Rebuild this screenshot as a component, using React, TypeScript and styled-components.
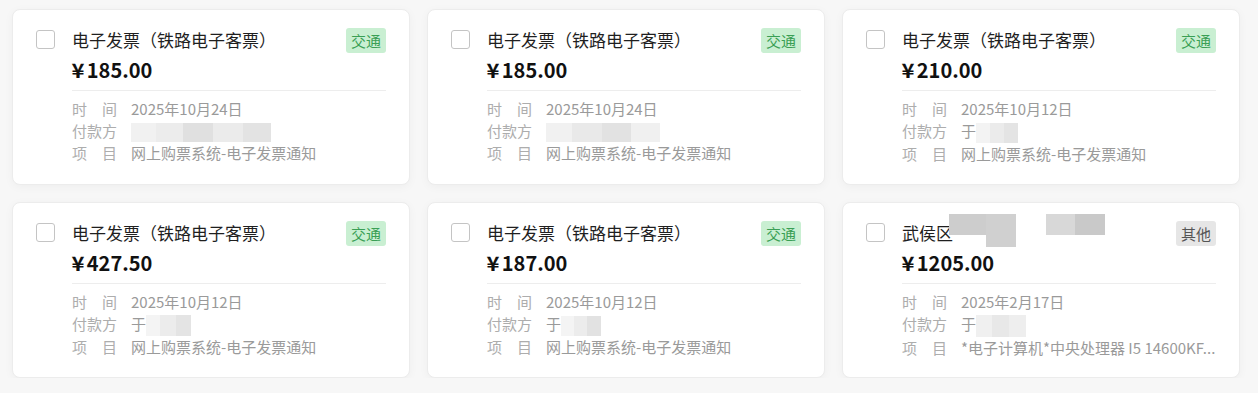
import React from 'react'
import styled, { createGlobalStyle } from 'styled-components'

type Tile = { w: number; h?: number; c: string }
type MosaicSpec = { tiles: Tile[]; h: number; top?: number; gapBefore?: number }

interface invoiceProps {
	title: string;
	titleMosaic?: MosaicSpec[];
	tag: string;
	tagKind: 'traffic' | 'other';
	amount: string;
	date: string;
	payerPrefix?: string;
	payerMosaic: MosaicSpec;
	item: string;
}

const invoices: invoiceProps[] = [
	{
		title: '电子发票（铁路电子客票）',
		tag: '交通',
		tagKind: 'traffic',
		amount: '185.00',
		date: '2025年10月24日',
		payerMosaic: {
			h: 19,
			tiles: [
				{ w: 25, c: '#f1f1f1' },
				{ w: 27, c: '#ececec' },
				{ w: 30, c: '#e0e0e0' },
				{ w: 30, c: '#ebebeb' },
				{ w: 28, c: '#e3e3e3' },
			],
		},
		item: '网上购票系统-电子发票通知',
	},
	{
		title: '电子发票（铁路电子客票）',
		tag: '交通',
		tagKind: 'traffic',
		amount: '185.00',
		date: '2025年10月24日',
		payerMosaic: {
			h: 19,
			tiles: [
				{ w: 26, c: '#f1f1f1' },
				{ w: 30, c: '#e9e9e9' },
				{ w: 29, c: '#e2e2e2' },
				{ w: 29, c: '#f0f0f0' },
			],
		},
		item: '网上购票系统-电子发票通知',
	},
	{
		title: '电子发票（铁路电子客票）',
		tag: '交通',
		tagKind: 'traffic',
		amount: '210.00',
		date: '2025年10月12日',
		payerPrefix: '于',
		payerMosaic: {
			h: 20,
			tiles: [
				{ w: 14, c: '#f3f3f3' },
				{ w: 14, c: '#ebebeb' },
				{ w: 14, c: '#e4e4e4' },
			],
		},
		item: '网上购票系统-电子发票通知',
	},
	{
		title: '电子发票（铁路电子客票）',
		tag: '交通',
		tagKind: 'traffic',
		amount: '427.50',
		date: '2025年10月12日',
		payerPrefix: '于',
		payerMosaic: {
			h: 21,
			tiles: [
				{ w: 14, c: '#f4f4f4' },
				{ w: 16, c: '#ececec' },
				{ w: 15, c: '#e4e4e4' },
			],
		},
		item: '网上购票系统-电子发票通知',
	},
	{
		title: '电子发票（铁路电子客票）',
		tag: '交通',
		tagKind: 'traffic',
		amount: '187.00',
		date: '2025年10月12日',
		payerPrefix: '于',
		payerMosaic: {
			h: 20,
			tiles: [
				{ w: 13, c: '#f4f4f4' },
				{ w: 13, c: '#ececec' },
				{ w: 14, c: '#e2e2e2' },
			],
		},
		item: '网上购票系统-电子发票通知',
	},
	{
		title: '武侯区',
		titleMosaic: [
			{
				h: 33,
				top: -6,
				gapBefore: -4,
				tiles: [
					{ w: 7, c: '#cdcdcd', h: 21 },
					{ w: 30, c: '#cdcdcd', h: 21 },
					{ w: 30, c: '#d0d0d0' },
				],
			},
			{
				h: 21,
				top: -6,
				gapBefore: 30,
				tiles: [
					{ w: 29, c: '#d8d8d8' },
					{ w: 30, c: '#c9c9c9' },
				],
			},
		],
		tag: '其他',
		tagKind: 'other',
		amount: '1205.00',
		date: '2025年2月17日',
		payerPrefix: '于',
		payerMosaic: {
			h: 22,
			tiles: [
				{ w: 16, c: '#f0f0f0' },
				{ w: 17, c: '#e8e8e8' },
				{ w: 17, c: '#eeeeee' },
			],
		},
		item: '*电子计算机*中央处理器 I5 14600KF...',
	},
]

const Mosaic = ({ spec }: { spec: MosaicSpec }) => (
	<MosaicBox $h={spec.h} $top={spec.top ?? 0} $gap={spec.gapBefore ?? 0}>
		{spec.tiles.map((t, i) => (
			<MosaicTile key={i} $w={t.w} $h={t.h ?? spec.h} $c={t.c} />
		))}
	</MosaicBox>
)

const InvoiceCard = (props: invoiceProps) => {
	return (
		<Card>
			<CheckBox />
			<Body>
				<Header>
					<Title>
						{props.title}
						{props.titleMosaic?.map((m, i) => <Mosaic key={i} spec={m} />)}
					</Title>
					<Tag $kind={props.tagKind}>{props.tag}</Tag>
				</Header>
				<Amount>
					<Currency>¥</Currency>
					{props.amount}
				</Amount>
				<Divider />
				<InfoList>
					<Label>时间</Label>
					<Value>{props.date}</Value>
					<Label>付款方</Label>
					<Value>
						{props.payerPrefix}
						<Mosaic spec={props.payerMosaic} />
					</Value>
					<Label>项目</Label>
					<Value>{props.item}</Value>
				</InfoList>
			</Body>
		</Card>
	)
}

export default function App() {
	return (
		<>
			<GlobalStyle />
			<Grid>
				{invoices.map((inv, i) => (
					<InvoiceCard key={i} {...inv} />
				))}
			</Grid>
		</>
	)
}

const GlobalStyle = createGlobalStyle`
	html, body {
		margin: 0;
		padding: 0;
		background: #f7f7f7;
		font-family: "Noto Sans CJK SC", "Noto Sans", sans-serif;
	}
`

const Grid = styled.div`
	display: grid;
	grid-template-columns: repeat(3, 398px);
	column-gap: 17px;
	row-gap: 17px;

	padding: 9px 18px 0 12px;
`

const Card = styled.div`
	display: grid;
	grid-template-columns: 19px 1fr;
	column-gap: 17px;
	align-items: start;

	height: 176px;
	box-sizing: border-box;
	padding: 17px 23px 0 23px;

	background: #fff;
	border: 1px solid #ececec;
	border-radius: 8px;
	box-shadow: 0 2px 10px rgba(0, 0, 0, 0.04);
`

const CheckBox = styled.span`
	width: 19px;
	height: 19px;
	margin-top: 3px;
	box-sizing: border-box;

	border: 1px solid #c4c4c4;
	border-radius: 3px;
	background: #fff;
`

const Body = styled.div`
	display: flex;
	flex-direction: column;
	min-width: 0;
`

const Header = styled.div`
	display: flex;
	justify-content: space-between;
	align-items: flex-start;
	height: 25px;
`

const Title = styled.div`
	display: flex;
	align-items: flex-start;

	font-size: 17px;
	line-height: 25px;
	color: #1f1f1f;
	white-space: nowrap;
`

const Tag = styled.span<{ $kind: 'traffic' | 'other' }>`
	width: 40px;
	height: 25px;
	margin-top: 1px;

	border-radius: 3px;
	text-align: center;
	font-size: 15px;
	line-height: 25px;

	background: ${p => (p.$kind === 'traffic' ? '#c9efd2' : '#e6e6e6')};
	color: ${p => (p.$kind === 'traffic' ? '#3a9f55' : '#555')};
`

const Amount = styled.div`
	margin-top: 4px;

	font-size: 20px;
	font-weight: 700;
	line-height: 28px;
	color: #111;
`

const Currency = styled.span`
	display: inline-block;
	margin-right: 3px;
	transform: scaleX(1.1);
`

const Divider = styled.div`
	height: 1px;
	margin-top: 6px;
	background: #ededed;
`

const InfoList = styled.div`
	display: grid;
	grid-template-columns: 45px 1fr;
	column-gap: 14px;

	margin-top: 7px;

	font-size: 15px;
	line-height: 22px;
`

const Label = styled.span`
	color: #adadad;
	text-align: justify;
	text-align-last: justify;
`

const Value = styled.span`
	display: block;
	min-width: 0;

	color: #9a9a9a;
	white-space: nowrap;
	overflow: hidden;
`

const MosaicBox = styled.span<{ $h: number; $top: number; $gap: number }>`
	display: inline-flex;
	align-items: flex-start;
	vertical-align: middle;

	height: ${p => p.$h}px;
	margin-top: ${p => p.$top}px;
	margin-left: ${p => p.$gap}px;
`

const MosaicTile = styled.span<{ $w: number; $h: number; $c: string }>`
	display: block;
	width: ${p => p.$w}px;
	height: ${p => p.$h}px;
	background: ${p => p.$c};
`
